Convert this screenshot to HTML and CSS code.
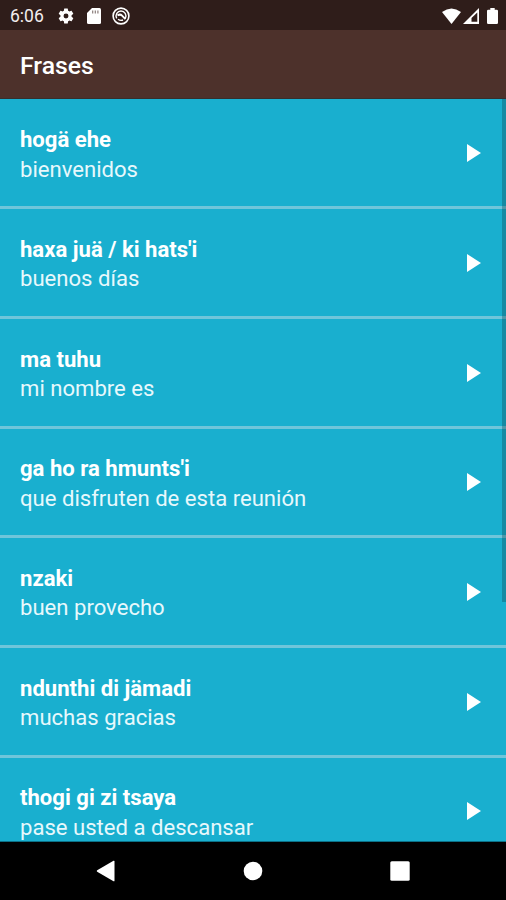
FILE: index.html
```html
<!DOCTYPE html>
<html lang="es">
<head>
<meta charset="utf-8">
<title>Frases</title>
<link rel="stylesheet" href="styles.css">
</head>
<body>
<div class="screen">
  <header class="status">
    <span class="time">6:06</span>
    <svg class="gear" width="18" height="18" viewBox="0 0 24 24"><path fill="#fff" fill-rule="evenodd" d="M19.400 13a7.500 7.500 0 0 0 0-2l2.100-1.600c.2-.1.300-.4.100-.6l-2-3.500c-.1-.2-.4-.3-.6-.2l-2.500 1a7.300 7.300 0 0 0-1.700-1L14.400 2.400A.5.5 0 0 0 14 2h-4a.5.5 0 0 0-.5.400L9.200 5.100a7.300 7.300 0 0 0-1.700 1L5 5.100c-.2-.1-.5 0-.6.2l-2 3.500c-.1.200-.1.500.1.600L4.600 11a7.500 7.500 0 0 0 0 2l-2.100 1.600c-.2.200-.2.400-.1.600l2 3.500c.1.200.4.300.6.200l2.500-1a7.300 7.300 0 0 0 1.700 1l.3 2.700c0 .2.200.4.500.4h4c.2 0 .4-.2.400-.4l.4-2.700a7.300 7.300 0 0 0 1.700-1l2.500 1c.2.100.5 0 .6-.2l2-3.500c.1-.2.100-.4-.1-.6zM12 15.300a3.300 3.300 0 1 1 0-6.600 3.300 3.300 0 0 1 0 6.600z"/></svg>
    <svg class="sd" width="14" height="16" viewBox="0 0 14 16"><path fill="#fff" fill-rule="evenodd" d="M5 0h7.500Q14 0 14 1.500v13q0 1.500-1.500 1.500h-11Q0 16 0 14.500V5z"/><path stroke="#8b7d7a" stroke-width="1.200" d="M5.700 2.500v3M8.300 2.500v3M10.900 2.500v3"/></svg>
    <svg class="sync" width="18" height="18" viewBox="0 0 18 18" fill="none" stroke="#fff"><circle cx="9" cy="9" r="7.900" stroke-width="1.600"/><path stroke-width="1.400" d="M13.300 11.300A4.900 4.900 0 1 0 4.700 11.300"/><path stroke-width="2" d="M5.500 8.300c2-1 3.400-.8 4.300.1l3.700 3.700"/><path stroke-width="1.400" d="M6 12.300q2.500 1.800 5 .7"/></svg>
    <span class="grow"></span>
    <svg class="wifi" width="19" height="16" viewBox="0 0 19 16"><path fill="#fff" d="M0 4Q9.500-3 19 4L9.500 16z"/></svg>
    <svg class="signal" width="16" height="16" viewBox="0 0 16 16"><path fill="#fff" fill-rule="evenodd" d="M16 0v16H0zM14.300 4.500v9.300H8.500V10z"/></svg>
    <svg class="battery" width="11" height="16" viewBox="0 0 11 16"><path fill="#fff" d="M3.300 0h4.400v1.700h2Q11 1.700 11 3v11.700Q11 16 9.700 16H1.300Q0 16 0 14.700V3q0-1.300 1.300-1.300h2z"/></svg>
  </header>
  <div class="appbar"><h1>Frases</h1></div>
  <main class="content">
    <ul class="list">
      <li class="row"><div><b>hogä ehe</b><p>bienvenidos</p></div><svg class="play" viewBox="0 0 14 18"><path d="M0 0l14 9L0 18z"/></svg></li>
      <li class="row"><div><b>haxa juä / ki hats'i</b><p>buenos días</p></div><svg class="play" viewBox="0 0 14 18"><path d="M0 0l14 9L0 18z"/></svg></li>
      <li class="row"><div><b>ma tuhu</b><p>mi nombre es</p></div><svg class="play" viewBox="0 0 14 18"><path d="M0 0l14 9L0 18z"/></svg></li>
      <li class="row"><div><b>ga ho ra hmunts'i</b><p>que disfruten de esta reunión</p></div><svg class="play" viewBox="0 0 14 18"><path d="M0 0l14 9L0 18z"/></svg></li>
      <li class="row"><div><b>nzaki</b><p>buen provecho</p></div><svg class="play" viewBox="0 0 14 18"><path d="M0 0l14 9L0 18z"/></svg></li>
      <li class="row"><div><b>ndunthi di jämadi</b><p>muchas gracias</p></div><svg class="play" viewBox="0 0 14 18"><path d="M0 0l14 9L0 18z"/></svg></li>
      <li class="row"><div><b>thogi gi zi tsaya</b><p>pase usted a descansar</p></div><svg class="play" viewBox="0 0 14 18"><path d="M0 0l14 9L0 18z"/></svg></li>
    </ul>
    <div class="scrollbar"></div>
  </main>
  <nav class="nav">
    <svg width="20" height="22" viewBox="0 0 20 22"><path fill="#fff" d="M17.500.8Q18.500.3 18.500 1.500v19q0 1.200-1 .7L1.200 11.700Q.2 11 1.200 10.300z"/></svg>
    <svg width="20" height="20" viewBox="0 0 20 20"><circle cx="10" cy="10" r="9.300" fill="#fff"/></svg>
    <svg width="20" height="20" viewBox="0 0 20 20"><rect x=".3" y=".3" width="19.400" height="19.400" rx="1.500" fill="#fff"/></svg>
  </nav>
</div>
</body>
</html>
```
FILE: styles.css
```css
* { box-sizing: border-box; margin: 0; padding: 0; }
body { background: #000; color: #fff; font-family: Roboto, "Liberation Sans", sans-serif; }
svg { display: block; flex: none; }
.screen { width: 506px; height: 900px; display: flex; flex-direction: column; overflow: hidden; }
.status { height: 30px; flex: none; background: #2f1d1a; display: flex; align-items: center; padding: 1px 8px 0 10px; }
.time { width: 47px; font-size: 17.500px; line-height: 30px; color: #f3eeee; }
.gear { margin-right: 12px; }
.sd { margin-right: 11px; }
.grow { flex: 1; }
.signal { margin: 0 8px 0 2px; }
.appbar { height: 69px; flex: none; background: #4d312b; border-bottom: 1px solid #35302e; display: flex; align-items: center; padding: 3px 20px 0; }
h1 { font-size: 24.800px; line-height: 30px; font-weight: 500; }
.content { position: relative; flex: 1; min-height: 0; overflow: hidden; background: #19afcf; border-bottom: 1px solid #0b7188; }
.list { list-style: none; padding-top: .6px; }
.row { height: 109.700px; border-bottom: 3px solid #6fc5da; display: flex; justify-content: space-between; align-items: flex-start; padding: 25.700px 25px 0 20px; font-size: 22.100px; line-height: 29.400px; white-space: nowrap; }
.row b { display: block; font-weight: 700; }
.row p { color: #e7f8fc; }
.play { width: 14px; height: 18px; margin-top: 18.900px; fill: #fff; }
.scrollbar { position: absolute; right: 0; top: 0; width: 4.500px; height: 503px; background: rgba(15, 70, 80, .35); }
.nav { height: 58px; flex: none; background: #000; display: flex; align-items: center; justify-content: space-between; padding: 0 96px 0 96px; }
```
